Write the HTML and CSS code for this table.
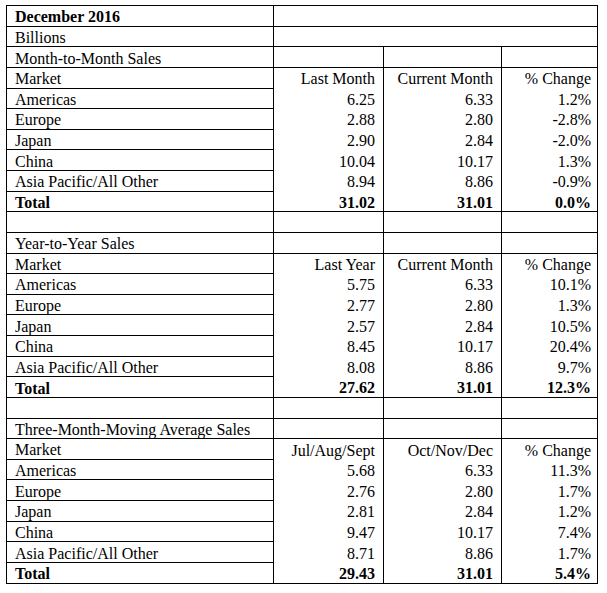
FILE: index.html
```html
<!DOCTYPE html>
<html>
<head>
<meta charset="utf-8">
<link rel="stylesheet" href="styles.css">
</head>
<body>
<table class="sales">
<colgroup><col class="c1"><col class="c2"><col class="c3"><col class="c4"></colgroup>
<tbody>
<tr><td class="b">December 2016</td><td colspan="3"></td></tr>
<tr><td>Billions</td><td colspan="3"></td></tr>
<tr><td>Month-to-Month Sales</td><td></td><td></td><td></td></tr>
<tr class="hdr"><td>Market</td><td class="n">Last Month</td><td class="n">Current Month</td><td class="n p">% Change</td></tr>
<tr class="d"><td>Americas</td><td class="n">6.25</td><td class="n">6.33</td><td class="n p">1.2%</td></tr>
<tr class="d"><td>Europe</td><td class="n">2.88</td><td class="n">2.80</td><td class="n p">-2.8%</td></tr>
<tr class="d"><td>Japan</td><td class="n">2.90</td><td class="n">2.84</td><td class="n p">-2.0%</td></tr>
<tr class="d"><td>China</td><td class="n">10.04</td><td class="n">10.17</td><td class="n p">1.3%</td></tr>
<tr class="d"><td>Asia Pacific/All Other</td><td class="n">8.94</td><td class="n">8.86</td><td class="n p">-0.9%</td></tr>
<tr class="tot"><td class="b">Total</td><td class="n b">31.02</td><td class="n b">31.01</td><td class="n p b">0.0%</td></tr>
<tr><td></td><td></td><td></td><td></td></tr>
<tr><td>Year-to-Year Sales</td><td></td><td></td><td></td></tr>
<tr class="hdr"><td>Market</td><td class="n">Last Year</td><td class="n">Current Month</td><td class="n p">% Change</td></tr>
<tr class="d"><td>Americas</td><td class="n">5.75</td><td class="n">6.33</td><td class="n p">10.1%</td></tr>
<tr class="d"><td>Europe</td><td class="n">2.77</td><td class="n">2.80</td><td class="n p">1.3%</td></tr>
<tr class="d"><td>Japan</td><td class="n">2.57</td><td class="n">2.84</td><td class="n p">10.5%</td></tr>
<tr class="d"><td>China</td><td class="n">8.45</td><td class="n">10.17</td><td class="n p">20.4%</td></tr>
<tr class="d"><td>Asia Pacific/All Other</td><td class="n">8.08</td><td class="n">8.86</td><td class="n p">9.7%</td></tr>
<tr class="tot"><td class="b">Total</td><td class="n b">27.62</td><td class="n b">31.01</td><td class="n p b">12.3%</td></tr>
<tr><td></td><td></td><td></td><td></td></tr>
<tr><td>Three-Month-Moving Average Sales</td><td></td><td></td><td></td></tr>
<tr class="hdr"><td>Market</td><td class="n">Jul/Aug/Sept</td><td class="n">Oct/Nov/Dec</td><td class="n p">% Change</td></tr>
<tr class="d"><td>Americas</td><td class="n">5.68</td><td class="n">6.33</td><td class="n p">11.3%</td></tr>
<tr class="d"><td>Europe</td><td class="n">2.76</td><td class="n">2.80</td><td class="n p">1.7%</td></tr>
<tr class="d"><td>Japan</td><td class="n">2.81</td><td class="n">2.84</td><td class="n p">1.2%</td></tr>
<tr class="d"><td>China</td><td class="n">9.47</td><td class="n">10.17</td><td class="n p">7.4%</td></tr>
<tr class="d"><td>Asia Pacific/All Other</td><td class="n">8.71</td><td class="n">8.86</td><td class="n p">1.7%</td></tr>
<tr class="tot"><td class="b">Total</td><td class="n b">29.43</td><td class="n b">31.01</td><td class="n p b">5.4%</td></tr>
</tbody>
</table>
</body>
</html>
```
FILE: styles.css
```css
html, body {
  margin: 0;
  background: #fff;
}
body {
  padding: 5px 0 0 6px;
  font-family: "Liberation Serif", "Times New Roman", serif;
  font-size: 16px;
  color: #000;
}
.sales {
  border-collapse: collapse;
  table-layout: fixed;
  width: 591px;
}
.c1 { width: 267px; }
.c2 { width: 110px; }
.c3 { width: 118px; }
.c4 { width: 96px; }
.sales tr { height: 20.64px; }
.sales td {
  border: 1px solid #000;
  padding: 2px 8px 0 8px;
  line-height: 17px;
  white-space: nowrap;
  vertical-align: middle;
}
.sales td.n { text-align: right; }
.sales td.p { padding-right: 6px; }
.sales td.b { font-weight: bold; }
.hdr td.n { border-bottom: none; }
.d td.n { border-top: none; border-bottom: none; }
.tot td.n { border-top: none; }
```
